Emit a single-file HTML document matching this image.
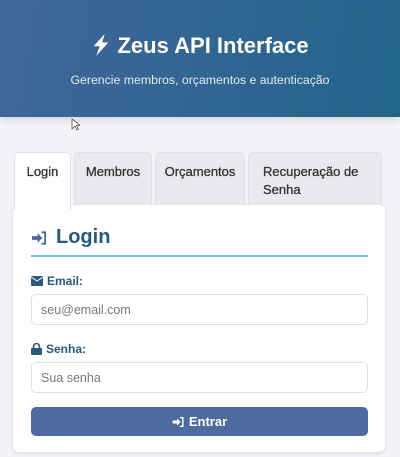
<!DOCTYPE html>
<html><head><meta charset="utf-8"><style>
*{box-sizing:border-box;margin:0;padding:0}
body{width:400px;height:457px;overflow:hidden;background:#f3f4f7;font-family:"Liberation Sans",sans-serif;position:relative}
.hdr{position:absolute;left:0;top:0;width:400px;height:117px;background:linear-gradient(100deg,#41679b,#22648a);box-shadow:0 3px 8px rgba(0,0,0,.12)}
.hdr h1{position:absolute;top:33px;width:100%;text-align:center;color:#fff;font-size:22px;font-weight:bold}
.hdr p{position:absolute;top:73px;width:100%;text-align:center;color:#e3ebf3;font-size:12.3px}
.tab{position:absolute;top:152px;height:56px;background:#e9eaee;border:1px solid #dfe1e6;border-bottom:none;border-radius:5px 5px 0 0;font-size:13px;color:#333;padding:10px 0 0 0;text-align:center;line-height:18px;-webkit-text-stroke:.3px #333}
.card{position:absolute;left:13px;top:205px;width:372px;height:247px;background:#fff;border-radius:6px;box-shadow:0 1px 4px rgba(0,0,0,.12)}
.h2{position:absolute;left:31px;top:226px;font-size:20px;font-weight:bold;color:#285a80;display:flex;align-items:center;gap:8px}
.line{position:absolute;left:31px;top:255px;width:337px;height:2px;background:#6cc4e6}
.lbl{position:absolute;left:31px;font-size:12px;font-weight:bold;color:#285a80;display:flex;align-items:center;gap:4px}
.inp{position:absolute;left:31px;width:337px;height:31px;border:1px solid #dcdfe4;border-radius:5px;font-size:12.5px;color:#777;padding:8px 0 0 9px}
.btn{position:absolute;left:31px;top:407px;width:337px;height:29px;background:#4d6b9e;border-radius:5px;color:#fff;font-size:13px;font-weight:bold;display:flex;align-items:center;justify-content:center;gap:4px}
</style></head><body>
<div class="hdr"><h1><svg width="20" height="22" viewBox="0 0 16 18" style="vertical-align:-3px"><path d="M11 0 2 10h5l-3 8 10-11H9z" fill="#fff"/></svg> Zeus API Interface</h1><p>Gerencie membros, orçamentos e autenticação</p></div>
<svg style="position:absolute;left:71px;top:118px" width="9" height="13" viewBox="0 0 9 13"><path d="M1 1v10l3-3 2 4 1.5-.7-2-4H9z" fill="#fff" stroke="#555" stroke-width=".8"/></svg>
<div class="tab" style="left:74px;width:78px">Membros</div>
<div class="tab" style="left:155px;width:90px">Orçamentos</div>
<div class="tab" style="left:248px;width:134px;text-align:left;padding-left:14px">Recuperação de<br>Senha</div>
<div class="card"></div>
<div class="tab" style="left:14px;width:57px;background:#fff;height:58px">Login</div>
<div class="h2"><svg width="17" height="16" viewBox="0 0 18 16"><path d="M1 6h6V3l5 5-5 5v-3H1z" fill="#4d6b9e"/><path d="M11 2h4v12h-4" fill="none" stroke="#4d6b9e" stroke-width="2"/></svg>Login</div>
<div class="line"></div>
<div class="lbl" style="top:274px"><svg width="12" height="10" viewBox="0 0 12 10"><rect width="12" height="10" rx="1" fill="#285a80"/><path d="M0 1l6 4 6-4" stroke="#fff" fill="none"/></svg>Email:</div>
<div class="inp" style="top:294px">seu@email.com</div>
<div class="lbl" style="top:342px"><svg width="11" height="12" viewBox="0 0 11 12"><path d="M2.5 5V3.5a3 3 0 0 1 6 0V5" stroke="#285a80" stroke-width="1.6" fill="none"/><rect y="5" width="11" height="7" rx="1" fill="#285a80"/></svg>Senha:</div>
<div class="inp" style="top:362px">Sua senha</div>
<div class="btn"><svg width="13" height="12" viewBox="0 0 18 16"><path d="M1 6h6V3l5 5-5 5v-3H1z" fill="#fff"/><path d="M11 2h4v12h-4" fill="none" stroke="#fff" stroke-width="2"/></svg>Entrar</div>
</body></html>
